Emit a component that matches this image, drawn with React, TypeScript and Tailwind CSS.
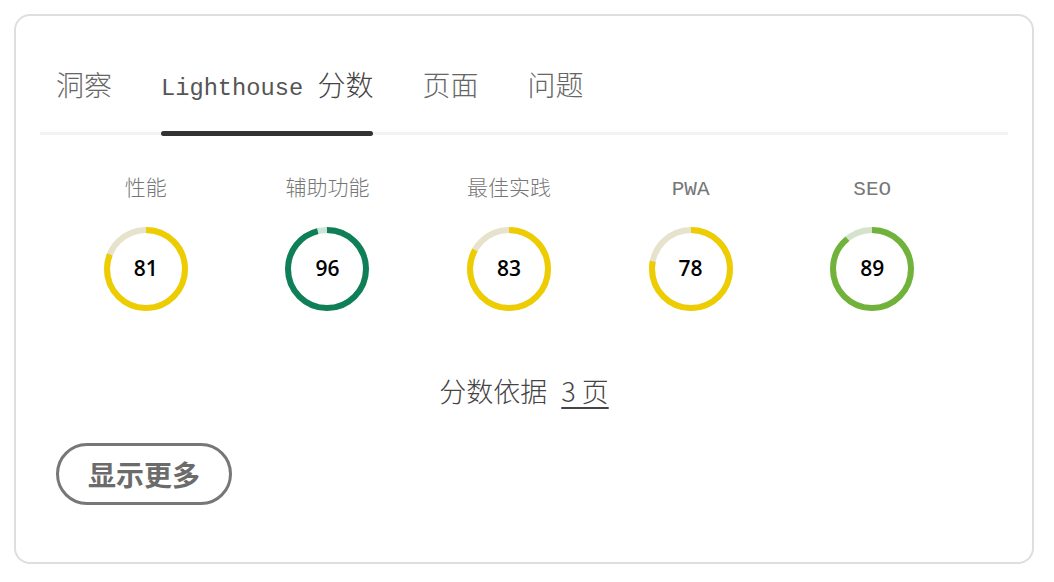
import React from "react";

type Score = { label: string; value: number; color: string; track: string };

const scores: Score[] = [
  { label: "性能", value: 81, color: "#edcd00", track: "#e6e2cc" },
  { label: "辅助功能", value: 96, color: "#0f7f58", track: "#c9e6d9" },
  { label: "最佳实践", value: 83, color: "#edcd00", track: "#e6e2cc" },
  { label: "PWA", value: 78, color: "#edcd00", track: "#e6e2cc" },
  { label: "SEO", value: 89, color: "#71b33a", track: "#d5e2cc" },
];

const FONT_LABEL = { fontFamily: '"Liberation Mono", "Noto Sans CJK SC", monospace' };

function Gauge({ s }: { s: Score }) {
  const r = 39;
  const c = 2 * Math.PI * r;
  const len = (s.value / 100) * c;
  return (
    <div className="relative w-[84px] h-[84px]">
      <svg width="84" height="84" viewBox="0 0 84 84" className="-rotate-90">
        <circle cx="42" cy="42" r={r} fill="none" stroke={s.track} strokeWidth="6" />
        <circle
          cx="42"
          cy="42"
          r={r}
          fill="none"
          stroke={s.color}
          strokeWidth="6"
          strokeDasharray={`${len} ${c}`}
        />
      </svg>
      <div
        className="absolute inset-0 flex items-center justify-center text-[21px] font-semibold text-black"
        style={{ fontFamily: '"Open Sans", "Noto Sans", sans-serif' }}
      >
        {s.value}
      </div>
    </div>
  );
}

function Tab({ cjk, latin, active }: { cjk: string; latin?: string; active?: boolean }) {
  return (
    <div className="relative flex items-center h-[32px] whitespace-pre" style={FONT_LABEL}>
      {latin && <span className="text-[23.7px] text-[#555]">{latin}</span>}
      <span className={`text-[28px] font-light ${active ? "text-[#444]" : "text-[#666]"}`}>{cjk}</span>
      {active && (
        <div className="absolute left-0 right-0 -bottom-[31px] h-[5px] rounded-full bg-[#333]" />
      )}
    </div>
  );
}

export default function App() {
  return (
    <div className="w-[1054px] h-[582px] bg-white p-[14px]">
      <div className="w-[1020px] h-[550px] rounded-[16px] border-2 border-[#dedede] px-[24px]">
        <div className="flex items-center gap-[49px] pl-[16px] pt-[57px] pb-[27px] border-b-[3px] border-[#f2f2f2]">
          <Tab cjk="洞察" />
          <Tab latin="Lighthouse " cjk="分数" active />
          <Tab cjk="页面" />
          <Tab cjk="问题" />
        </div>

        <div className="ml-[15px] mt-[41px] grid grid-cols-5 w-[908px]">
          {scores.map((s) => (
            <div key={s.label} className="flex flex-col items-center">
              <div className="h-[28px] leading-[28px] text-[21px] font-light text-[#777]" style={FONT_LABEL}>
                {s.label}
              </div>
              <div className="mt-[23px]">
                <Gauge s={s} />
              </div>
            </div>
          ))}
        </div>

        <div
          className="mt-[63px] h-[34px] leading-[34px] text-center text-[27px] font-light text-[#444]"
          style={{ fontFamily: '"Noto Sans CJK SC", sans-serif' }}
        >
          分数依据<span className="ml-[14px] underline underline-offset-[5px] decoration-[2px]">3 页</span>
        </div>

        <div className="mt-[35px] pl-[16px]">
          <button
            className="h-[62px] w-[176px] rounded-full border-[3px] border-[#777] text-[28px] font-bold text-[#6b6b6b] flex items-center justify-center"
            style={{ fontFamily: '"Noto Sans CJK SC", sans-serif' }}
          >
            显示更多
          </button>
        </div>
      </div>
    </div>
  );
}
